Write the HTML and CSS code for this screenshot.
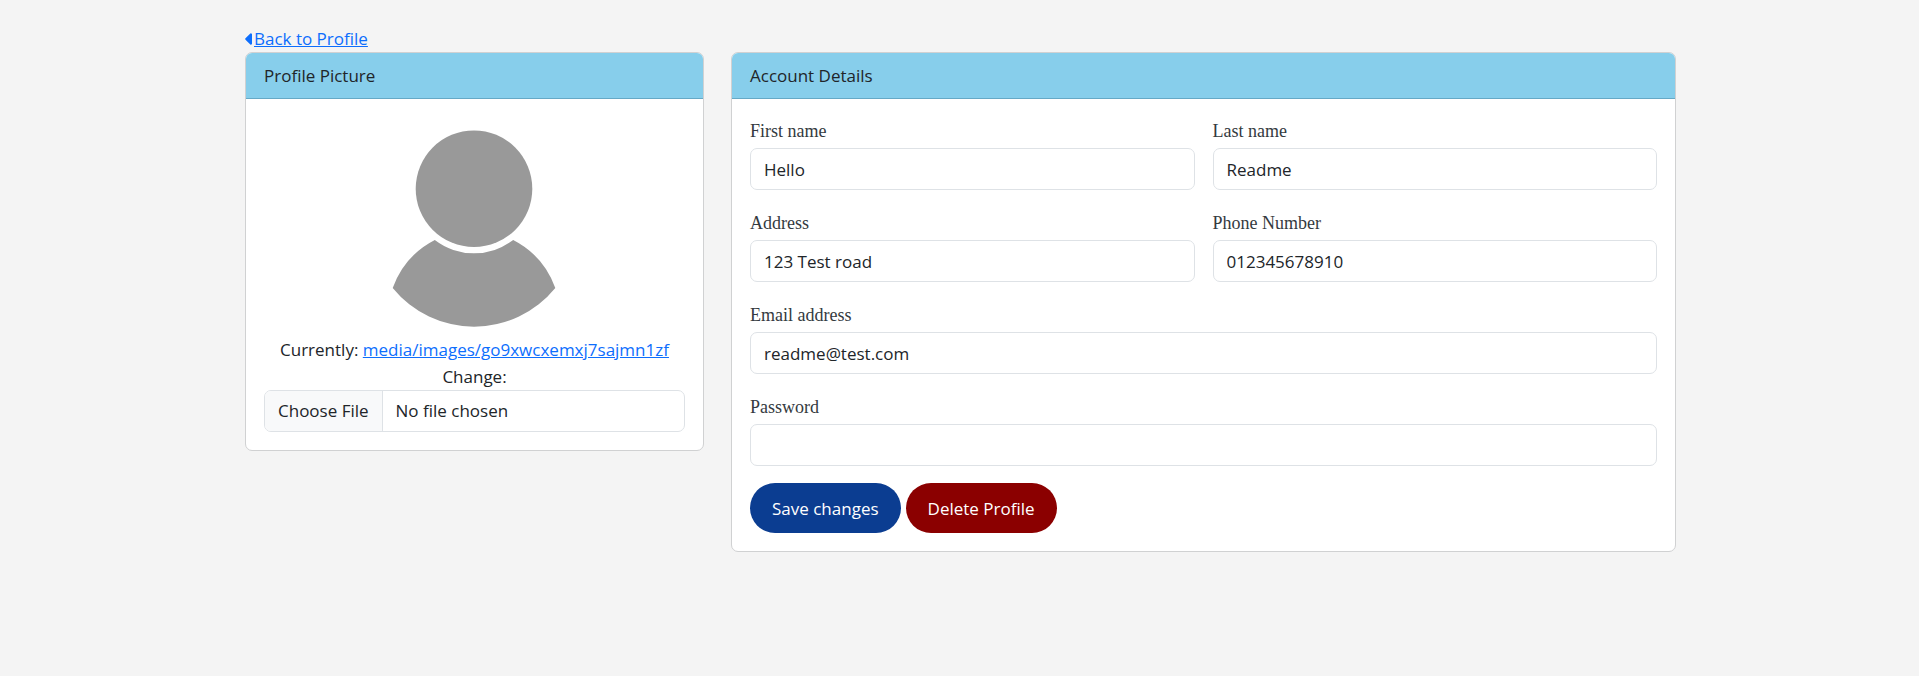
FILE: index.html
```html
<!DOCTYPE html>
<html lang="en">
<head>
<meta charset="utf-8">
<meta name="viewport" content="width=device-width, initial-scale=1">
<title>Edit Profile</title>
<link rel="stylesheet" href="styles.css">
</head>
<body>
<main class="container">
  <a class="back-link" href="#"><svg class="caret" viewBox="0 0 7 12" aria-hidden="true"><path d="M5.300 .6 .5 5.300a1 1 0 0 0 0 1.400L5.300 11.400A1 1 0 0 0 7 10.700V1.300A1 1 0 0 0 5.300 .6Z"/></svg><span class="back-text">Back to Profile</span></a>
  <div class="columns">
    <section class="card">
      <h2 class="card-header">Profile Picture</h2>
      <div class="card-body picture-body">
        <svg class="avatar" viewBox="0 0 210 219" role="img" aria-label="Profile picture">
          <circle cx="104" cy="71.700" r="58.300"/>
          <path d="M64.800 123A64.400 64.400 0 0 0 143.200 123A87 87 0 0 1 185.300 171A104.800 104.800 0 0 1 22.700 171A87 87 0 0 1 64.800 123Z"/>
        </svg>
        <div>Currently: <a href="#">media/images/go9xwcxemxj7sajmn1zf</a></div>
        <label for="image">Change:</label>
        <input class="control file-control" id="image" type="file">
      </div>
    </section>
    <section class="card">
      <h2 class="card-header">Account Details</h2>
      <form class="card-body">
        <div class="fields">
          <div class="field"><label class="field-label" for="first">First name</label><input class="control" id="first" type="text" value="Hello"></div>
          <div class="field"><label class="field-label" for="last">Last name</label><input class="control" id="last" type="text" value="Readme"></div>
          <div class="field"><label class="field-label" for="address">Address</label><input class="control" id="address" type="text" value="123 Test road"></div>
          <div class="field"><label class="field-label" for="phone">Phone Number</label><input class="control" id="phone" type="tel" value="012345678910"></div>
          <div class="field wide"><label class="field-label" for="email">Email address</label><input class="control" id="email" type="email" value="readme@test.com"></div>
          <div class="field wide"><label class="field-label" for="password">Password</label><input class="control" id="password" type="password"></div>
        </div>
        <div class="actions">
          <button class="btn save" type="submit">Save changes</button>
          <button class="btn delete" type="button">Delete Profile</button>
        </div>
      </form>
    </section>
  </div>
</main>
</body>
</html>
```
FILE: styles.css
```css
* { box-sizing: border-box; }

body {
  margin: 0;
  background: #f4f4f4;
  color: #212529;
  font: 17px/27px "Open Sans", "Noto Sans", sans-serif;
}

a { color: #0d6efd; }

.container {
  max-width: 1483px;
  margin: 0 auto;
  padding: 25px 25px 25px 27px;
}

.back-link {
  display: flex;
  align-items: center;
  gap: 2px;
  width: fit-content;
  text-decoration: none;
}

.back-text { text-decoration: underline; }

.caret {
  width: 7px;
  height: 12px;
  fill: currentColor;
}

.columns {
  display: grid;
  grid-template-columns: 459fr 945fr;
  gap: 27px;
  align-items: start;
}

.card {
  background: #fff;
  border: 1px solid #d0d1d2;
  border-radius: 7px;
  overflow: hidden;
}

.card-header {
  margin: 0;
  padding: 9px 18px;
  background: #87ceeb;
  border-bottom: 1px solid #66a9c6;
  font-size: 17px;
  font-weight: 400;
}

.card-body { padding: 17px 18px 18px; }

.picture-body {
  display: flex;
  flex-direction: column;
  align-items: center;
  padding-top: 18px;
  text-align: center;
}

.avatar {
  width: 210px;
  height: 219px;
  fill: #999;
}

.control {
  display: block;
  width: 100%;
  height: 42px;
  padding: 6px 13px;
  border: 1px solid #dee2e6;
  border-radius: 7px;
  background: #fff;
  color: #212529;
  font: inherit;
}

.file-control {
  padding: 0;
  line-height: 40px;
  overflow: hidden;
}

.file-control::file-selector-button {
  height: 40px;
  margin: 0 13px 0 0;
  padding: 0 13px;
  border: 0;
  border-right: 1px solid #dee2e6;
  background: #f8f9fa;
  color: #212529;
  font: inherit;
}

.fields {
  display: grid;
  grid-template-columns: 1fr 1fr;
  gap: 18px;
}

.wide { grid-column: 1 / -1; }

.field-label {
  display: block;
  padding-top: 2px;
  margin-bottom: 3px;
  font-family: "Liberation Serif", serif;
  font-size: 18px;
  color: #343a40;
}

.actions {
  display: flex;
  gap: 5px;
  margin-top: 17px;
}

.btn {
  height: 50px;
  padding: 0 22px;
  border: 0;
  border-radius: 25px;
  color: #fff;
  font: inherit;
}

.save { background: #0b3d91; }
.delete { background: #8b0000; }
```
